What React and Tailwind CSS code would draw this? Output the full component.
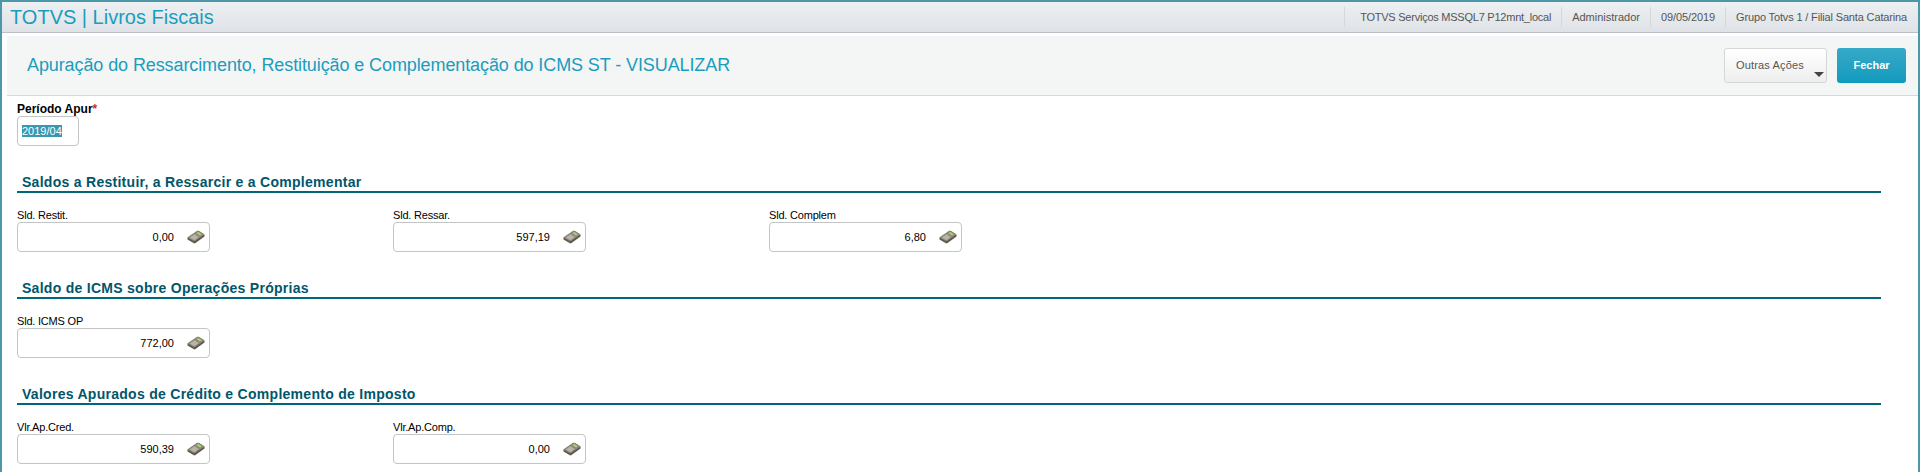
const font = { fontFamily: '"Liberation Sans", Arial, sans-serif' };

function CalcIcon() {
  return (
    <svg width="18" height="14" viewBox="0 0 18 14" className="shrink-0">
      <path d="M0.5 7.5 L10 1 Q11 0.5 12 1 L17.5 4.5 L17.5 6.5 L8.5 13 Q7.5 13.8 6.5 13 L0.5 9.5 Z" fill="#5f584e" />
      <path d="M0.5 7.5 L10 1 Q11 0.5 12 1 L17.5 4.5 L8 11 Q7.3 11.5 6.5 11 Z" fill="#8f887b" />
      <path d="M9.5 3 L11.3 1.9 L14.8 4.2 L12.9 5.5 Z" fill="#a2d873" />
      <path d="M2.8 7.5 L7.5 4.3 L11.8 7 L7.4 10.2 Z" fill="#b9b4a9" />
    </svg>
  );
}

function Field({ label, value }) {
  return (
    <div className="w-[193px]">
      <div className="text-[11px] leading-[17px] h-[15px] tracking-[-0.2px] text-black whitespace-nowrap">{label}</div>
      <div className="h-[30px] border border-[#c4c4c4] rounded-[4px] bg-white flex items-center justify-end pr-[4px] gap-[13px]">
        <span className="text-[11px] text-black">{value}</span>
        <CalcIcon />
      </div>
    </div>
  );
}

function Section({ title, children }) {
  return (
    <div className="mt-[24px]">
      <div className="border-b-2 border-[#00667c] h-[23px] pt-[2px] pl-[5px] mr-[37px] text-[14px] leading-[20px] font-bold text-[#00566b] tracking-[0.28px]">
        {title}
      </div>
      <div className="flex gap-[183px] mt-[14px]">{children}</div>
    </div>
  );
}

export default function App() {
  return (
    <div style={font} className="h-[472px] overflow-hidden bg-white border-l-2 border-r-2 border-t-2 border-[#4d98a8]">
      <header className="h-[31px] bg-linear-to-b from-[#eef0f2] to-[#dfe3e7] border-b border-[#b9c0c6] flex items-center justify-between pl-[8px] pr-[11px]">
        <h1 className="text-[20px] text-[#1a9dbd]">TOTVS | Livros Fiscais</h1>
        <div className="flex items-center h-[20px] text-[11px] text-[#555]">
          <span className="border-l border-[#d5d8db] pl-[15px] pr-[10px] leading-[20px] tracking-[-0.24px]">TOTVS Serviços MSSQL7 P12mnt_local</span>
          <span className="border-l border-[#d5d8db] px-[10px] leading-[20px]">Administrador</span>
          <span className="border-l border-[#d5d8db] px-[10px] leading-[20px] tracking-[-0.1px]">09/05/2019</span>
          <span className="border-l border-[#d5d8db] pl-[10px] leading-[20px] tracking-[-0.15px]">Grupo Totvs 1 / Filial Santa Catarina</span>
        </div>
      </header>
      <div className="pl-[5px] pt-[3px]">
        <div className="h-[60px] bg-[#f4f5f5] border-b border-[#d8d8d8] flex items-center justify-between pl-[20px] pr-[12px]">
          <h2 className="text-[18px] text-[#1a9dbd] tracking-[-0.1px]">
            Apuração do Ressarcimento, Restituição e Complementação do ICMS ST - VISUALIZAR
          </h2>
          <div className="flex gap-[10px]">
            <button className="relative w-[103px] h-[35px] rounded-[3px] border border-[#d6d6d6] bg-linear-to-b from-white to-[#eeeeee] text-[11px] tracking-[0.15px] text-[#555] text-left pl-[11px]">
              Outras Ações
              <span className="absolute right-[2px] bottom-[5px] border-x-[5px] border-t-[5px] border-x-transparent border-t-[#444]" />
            </button>
            <button className="w-[69px] h-[35px] rounded-[3px] bg-linear-to-b from-[#36a9c8] to-[#0f9abd] text-[11px] font-bold text-white">
              Fechar
            </button>
          </div>
        </div>
        <div className="pl-[10px]">
          <div className="pt-[5px]">
            <div className="text-[12px] leading-[17px] h-[15px] font-bold text-black">
              Período Apur<span className="text-[#e02020]">*</span>
            </div>
            <div className="w-[62px] h-[30px] border border-[#c4c4c4] rounded-[4px] flex items-center pl-[4px]">
              <span className="bg-[#3a97b0] text-white text-[11px] leading-[12px]">2019/04</span>
            </div>
          </div>
          <Section title="Saldos a Restituir, a Ressarcir e a Complementar">
            <Field label="Sld. Restit." value="0,00" />
            <Field label="Sld. Ressar." value="597,19" />
            <Field label="Sld. Complem" value="6,80" />
          </Section>
          <Section title="Saldo de ICMS sobre Operações Próprias">
            <Field label="Sld. ICMS OP" value="772,00" />
          </Section>
          <Section title="Valores Apurados de Crédito e Complemento de Imposto">
            <Field label="Vlr.Ap.Cred." value="590,39" />
            <Field label="Vlr.Ap.Comp." value="0,00" />
          </Section>
        </div>
      </div>
    </div>
  );
}
